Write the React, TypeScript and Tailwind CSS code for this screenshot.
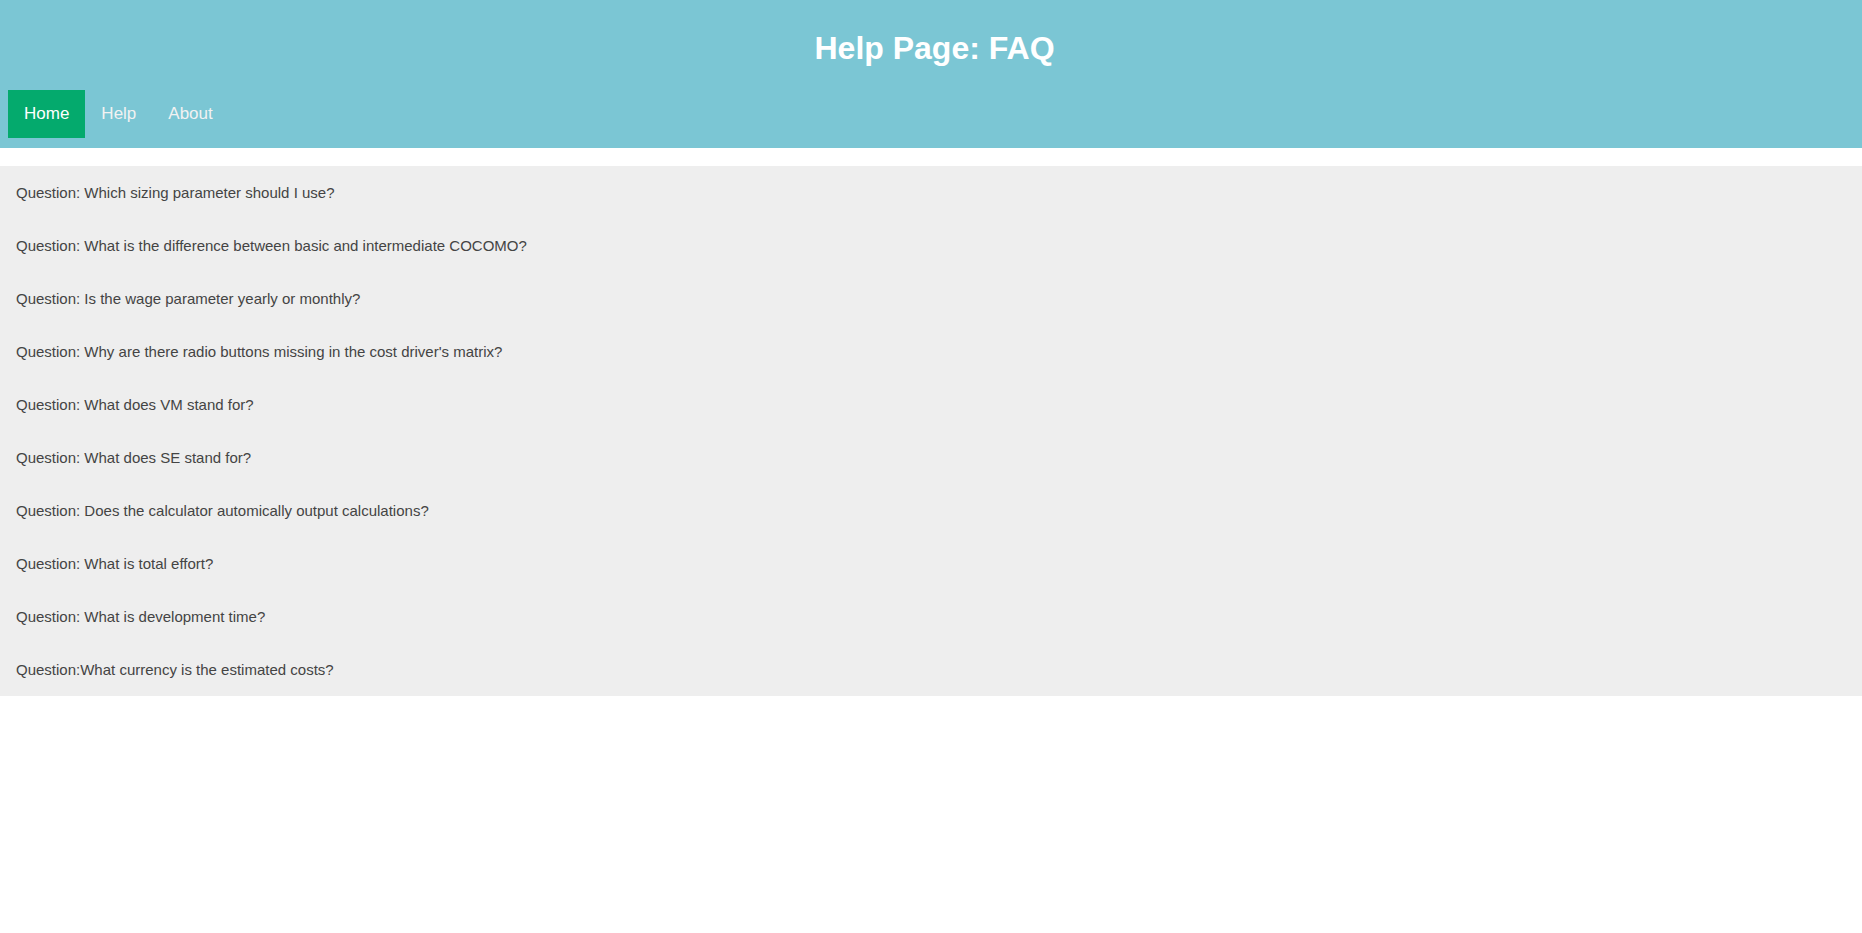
import React from 'react';

const questions = [
  'Question: Which sizing parameter should I use?',
  'Question: What is the difference between basic and intermediate COCOMO?',
  'Question: Is the wage parameter yearly or monthly?',
  "Question: Why are there radio buttons missing in the cost driver's matrix?",
  'Question: What does VM stand for?',
  'Question: What does SE stand for?',
  'Question: Does the calculator automically output calculations?',
  'Question: What is total effort?',
  'Question: What is development time?',
  'Question:What currency is the estimated costs?',
];

const navItems = ['Home', 'Help', 'About'];

const App: React.FC = () => {
  return (
    <div className="min-h-screen bg-white font-['Liberation_Sans',Arial,sans-serif]">
      <header className="bg-[#7bc6d4] pt-[30px] pb-[10px]">
        <h1 className="pl-[7px] text-center text-[32px] leading-[37px] font-bold text-white">Help Page: FAQ</h1>
        <nav className="flex px-2 mt-[23px]">
          {navItems.map((item, i) => (
            <a
              key={item}
              href="#"
              className={
                i === 0
                  ? 'block px-4 py-[14px] text-[17px] leading-[20px] bg-[#04aa6d] text-white'
                  : 'block px-4 py-[14px] text-[17px] leading-[20px] text-[#f2f2f2] hover:bg-[#ddd] hover:text-black'
              }
            >
              {item}
            </a>
          ))}
        </nav>
      </header>

      <main className="mt-[18px] bg-[#eeeeee] flex flex-col">
        {questions.map((q) => (
          <p key={q} className="px-4 py-[18px] text-[15px] leading-[17px] text-[#444]">
            {q}
          </p>
        ))}
      </main>
    </div>
  );
};

export default App;
